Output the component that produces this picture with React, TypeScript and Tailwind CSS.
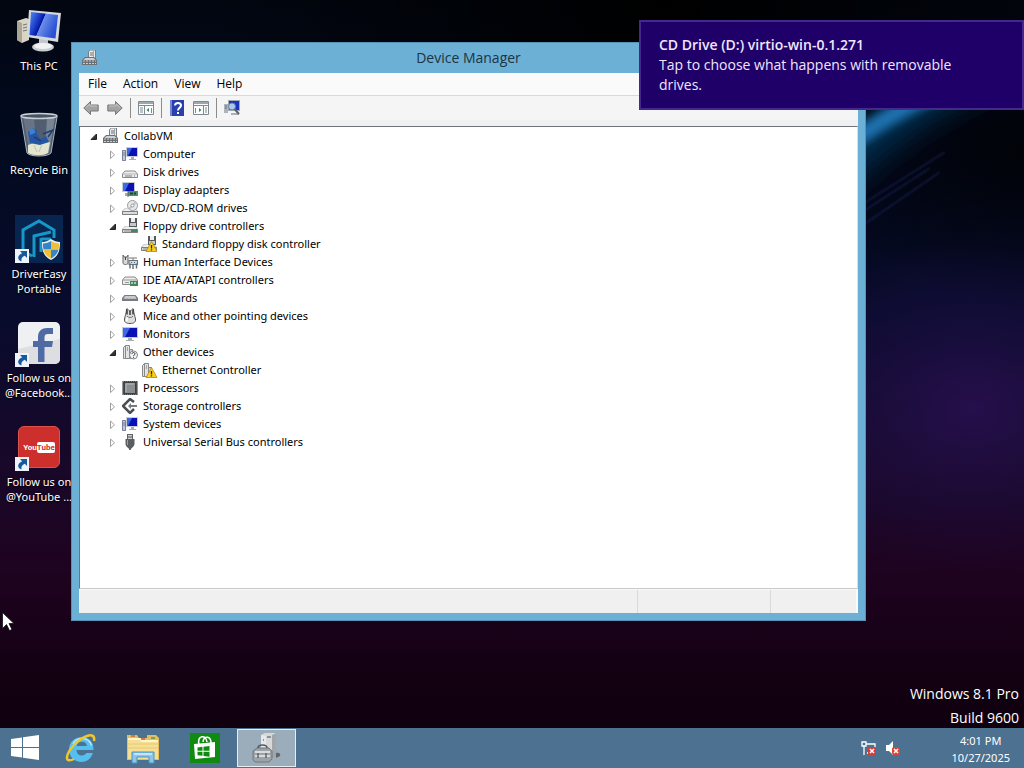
import React, { useState } from "react";

interface DeviceNode {
  label: string;
  icon: React.ReactNode;
  open?: boolean;
  children?: DeviceNode[];
}

function Svg16({ children }: { children: React.ReactNode }) {
  return (
    <svg viewBox="0 0 16 16" className="size-4 shrink-0" aria-hidden="true">
      {children}
    </svg>
  );
}

function Screen() {
  return (
    <>
      <rect x="4" y="1" width="12" height="10" fill="#c9ced6" />
      <rect x="5" y="2" width="10" height="8" fill="#0a12b4" />
      <path d="M5 2h5L6 10H5z" fill="#3d63e0" />
      <path d="M9 11h3v2h2v1H7v-1h2z" fill="#a9aeb5" />
    </>
  );
}

function Drive() {
  return (
    <>
      <path d="M3 8h10l3 3v4H0v-4z" fill="#bdbdbd" />
      <path d="M3.5 8.500h9L15 11H1z" fill="#efefef" />
      <path d="M.5 11.500h15v3H.5z" fill="#dcdcdc" stroke="#808080" />
      <path d="M2 13h8" stroke="#8d8d8d" />
    </>
  );
}

function FloppyDisk() {
  return (
    <>
      <rect x="7" y="0" width="8" height="9" fill="#55595f" />
      <rect x="9" y="0" width="4" height="4" fill="#eef0f2" />
      <rect x="8" y="5" width="6" height="3" fill="#c4c9cf" />
    </>
  );
}

function Warning() {
  return (
    <>
      <path d="M10.500 5.500L16 15.500H5z" fill="#f7cf1d" stroke="#b58b00" strokeWidth="0.800" strokeLinejoin="round" />
      <path d="M10.500 9v3.500M10.500 13.300v1.300" stroke="#3c2c00" strokeWidth="1.300" />
    </>
  );
}

function ComputerIcon() {
  return (
    <Svg16>
      <Screen />
      <rect x="0" y="4" width="4" height="11" fill="#c3c9d2" />
      <path d="M.5 4.500h3v10h-3zM1 7h2M1 9h2" fill="none" stroke="#7880a0" />
    </Svg16>
  );
}

function MonitorIcon() {
  return (
    <Svg16>
      <rect x="0" y="1" width="16" height="11" fill="#c5cbd3" />
      <rect x="1" y="2" width="14" height="9" fill="#0a12b4" />
      <path d="M1 2h7L3 11H1z" fill="#3d6ae6" />
      <path d="M6 12h4v2h2v1H4v-1h2z" fill="#a4abb3" />
    </Svg16>
  );
}

function DisplayIcon() {
  return (
    <Svg16>
      <rect x="0" y="0" width="13" height="10" fill="#c5cbd3" />
      <rect x="1" y="1" width="11" height="8" fill="#0a12b4" />
      <path d="M1 1h6L3 9H1z" fill="#3d6ae6" />
      <path d="M3 11h4v3H3z" fill="#a4abb3" />
      <rect x="6" y="9" width="10" height="5" fill="#4d8f72" />
      <path d="M8 10.500h3v2H8zM12 10.500h2v2h-2z" fill="#24463b" />
      <path d="M6 9v6" stroke="#60676d" />
    </Svg16>
  );
}

function DiskIcon() {
  return (
    <Svg16>
      <path d="M3 7h10l2.500 3v3.500H.5V10z" fill="#ececec" stroke="#8a8a8a" strokeLinejoin="round" />
      <path d="M1 10h14" stroke="#b5b5b5" />
      <path d="M3 12h7M12 12h1" stroke="#7b7b7b" />
    </Svg16>
  );
}

function DvdIcon() {
  return (
    <Svg16>
      <Drive />
      <circle cx="10.500" cy="5.500" r="5" fill="#e7e9ea" stroke="#979b9e" />
      <path d="M10.500 5.500L14 2M10.500 5.500L7 9" stroke="#bfc7cc" strokeWidth="2" />
      <circle cx="10.500" cy="5.500" r="1.500" fill="#fff" stroke="#999" />
      <path d="M.5 11.500h15v3H.5z" fill="#dcdcdc" stroke="#808080" />
    </Svg16>
  );
}

function FloppyIcon({ warning = false }: { warning?: boolean }) {
  return (
    <Svg16>
      <Drive />
      <FloppyDisk />
      {warning ? <Warning /> : <path d="M9 11h6v3H9z" fill="#3f8a66" />}
    </Svg16>
  );
}

function HidIcon() {
  return (
    <Svg16>
      <path d="M1 1l1 2h3l1-2v8c0 2-5 2-5 0z" fill="#d8d8d8" stroke="#666" />
      <path d="M3.500 3v3" stroke="#444" />
      <path d="M7 4h8M11 4v3" stroke="#777" />
      <rect x="7" y="6.500" width="8.500" height="4" fill="#d6d9dc" stroke="#687078" />
      <path d="M8 9.500v5M14.500 9.500v5M11 11v4" stroke="#687078" strokeWidth="1.500" />
      <path d="M9 8.500h1M12 8.500h1" stroke="#2f6f9c" />
    </Svg16>
  );
}

function IdeIcon() {
  return (
    <Svg16>
      <path d="M3 5h10l2.500 3v4.500H.5V8z" fill="#ececec" stroke="#8a8a8a" strokeLinejoin="round" />
      <path d="M1 8h14M3 10.500h4" stroke="#999" />
      <rect x="8" y="9" width="8" height="5" fill="#3c8a5e" />
      <path d="M9 10h2v2H9zM12 10h2v2h-2z" fill="#a6cbb0" />
    </Svg16>
  );
}

function KeyboardIcon() {
  return (
    <Svg16>
      <path d="M2.500 5h11L16 8v3H0V8z" fill="#777b7f" />
      <path d="M3 6h10l1.500 3H1.500z" fill="#d9dcde" />
      <path d="M3 7h10M2 8.500h12" stroke="#92979b" strokeWidth="0.700" strokeDasharray="1 0.500" />
    </Svg16>
  );
}

function MouseIcon() {
  return (
    <Svg16>
      <path d="M4.500 1C4.500 5 3 8 2.500 11c-.4 3 1.500 4.500 5.500 4.500s5.900-1.500 5.500-4.500C13 8 11.500 5 11.500 1 10 0 9.500 3 8 3S6 0 4.500 1z" fill="#dedede" stroke="#555" />
      <path d="M5 1.500v5M11 1.500v5M8 3v4" stroke="#3b3b3b" strokeWidth="1.500" />
      <path d="M5 8c1 2 5 2 6 0" fill="none" stroke="#777" />
      <path d="M4.500 13.500l1-4" stroke="#fff" strokeWidth="1.500" />
    </Svg16>
  );
}

function OtherIcon({ warning = false }: { warning?: boolean }) {
  return (
    <Svg16>
      <path d="M1.500 3.500l2-2v13h-2zM3.500 1.500h4v13h-4z" fill="#e1e3e4" stroke="#85898c" />
      <path d="M5 4h1M5 6h1" stroke="#666" />
      <path d="M7.500 5.500h3v9h-3z" fill="#d1d4d6" stroke="#85898c" />
      {warning ? (
        <Warning />
      ) : (
        <>
          <circle cx="11.500" cy="11" r="4" fill="#f4f5f6" stroke="#808488" />
          <path d="M10 10c0-2 3-2 3 0 0 1-1.500 1-1.500 2M11.500 12.800v1" fill="none" stroke="#333" />
        </>
      )}
    </Svg16>
  );
}

function ProcessorIcon() {
  return (
    <Svg16>
      <rect x="0.500" y="1" width="15" height="14" fill="#3e4143" />
      <rect x="1" y="1.500" width="14" height="13" fill="none" stroke="#77797a" strokeDasharray="1 1" />
      <rect x="3" y="3" width="10" height="10" fill="#8b8f91" />
      <path d="M4 12V4h8" fill="none" stroke="#b7babb" />
    </Svg16>
  );
}

function StorageIcon() {
  return (
    <Svg16>
      <path d="M12 4L8 1 1 8l7 7 4-4" fill="none" stroke="#4b4e50" strokeWidth="2.500" />
      <path d="M6 8l3-3v2h6v2H9v2z" fill="#777b7e" />
    </Svg16>
  );
}

function UsbIcon() {
  return (
    <Svg16>
      <rect x="5.500" y="0.500" width="5" height="5" fill="#d1d1d1" stroke="#606060" />
      <path d="M7 2v2M9 2v2" stroke="#555" />
      <path d="M3.500 5h9v5c0 2-2.500 3.500-3 4.500h-3c-.5-1-3-2.500-3-4.500z" fill="#5b5e60" />
      <path d="M5.500 6v5" stroke="#9da0a2" />
      <path d="M8 14v2" stroke="#444" strokeWidth="1.500" />
    </Svg16>
  );
}

function DeviceManagerIcon() {
  return (
    <Svg16>
      <path d="M6.500 1.500l2-1.500h5v9h-7z" fill="#e9ecee" stroke="#787d81" />
      <path d="M8 3h3M8 5h3" stroke="#6b7074" />
      <path d="M11.500 1v8" stroke="#a0a5a9" />
      <path d="M3 7h9l3 3v5H0v-5z" fill="#6c7073" />
      <path d="M3.500 8h8l2 2h-12z" fill="#cfd2d4" />
      <path d="M1 11h13M1 13.500h13" stroke="#c9cccf" strokeDasharray="2 1" />
    </Svg16>
  );
}

const devices: DeviceNode = {
  label: "CollabVM",
  icon: <DeviceManagerIcon />,
  open: true,
  children: [
    { label: "Computer", icon: <ComputerIcon />, children: [] },
    { label: "Disk drives", icon: <DiskIcon />, children: [] },
    { label: "Display adapters", icon: <DisplayIcon />, children: [] },
    { label: "DVD/CD-ROM drives", icon: <DvdIcon />, children: [] },
    {
      label: "Floppy drive controllers",
      icon: <FloppyIcon />,
      open: true,
      children: [
        { label: "Standard floppy disk controller", icon: <FloppyIcon warning /> },
      ],
    },
    { label: "Human Interface Devices", icon: <HidIcon />, children: [] },
    { label: "IDE ATA/ATAPI controllers", icon: <IdeIcon />, children: [] },
    { label: "Keyboards", icon: <KeyboardIcon />, children: [] },
    { label: "Mice and other pointing devices", icon: <MouseIcon />, children: [] },
    { label: "Monitors", icon: <MonitorIcon />, children: [] },
    {
      label: "Other devices",
      icon: <OtherIcon />,
      open: true,
      children: [{ label: "Ethernet Controller", icon: <OtherIcon warning /> }],
    },
    { label: "Processors", icon: <ProcessorIcon />, children: [] },
    { label: "Storage controllers", icon: <StorageIcon />, children: [] },
    { label: "System devices", icon: <ComputerIcon />, children: [] },
    { label: "Universal Serial Bus controllers", icon: <UsbIcon />, children: [] },
  ],
};

function TreeItem({ node }: { node: DeviceNode }) {
  const [open, setOpen] = useState(Boolean(node.open));

  return (
    <li>
      <div className="flex h-[18px] items-center">
        {node.children ? (
          <button
            type="button"
            aria-label={`Toggle ${node.label}`}
            aria-expanded={open}
            onClick={() => setOpen(!open)}
            className="flex h-4 w-[19px] items-center justify-center"
          >
            <svg viewBox="0 0 9 9" className="size-[9px]" aria-hidden="true">
              {open ? (
                <path d="M7.500 2v5.500H2z" fill="#333" stroke="#222" strokeLinejoin="round" />
              ) : (
                <path d="M2.500 1l4 3.800-4 3.800z" fill="#fff" stroke="#a0a0a0" />
              )}
            </svg>
          </button>
        ) : (
          <span className="w-[19px]" />
        )}
        {node.icon}
        <span className="ml-[5px] whitespace-nowrap">{node.label}</span>
      </div>
      {open && node.children && (
        <ul className="pl-[19px]">
          {node.children.map((child) => (
            <TreeItem key={child.label} node={child} />
          ))}
        </ul>
      )}
    </li>
  );
}

function ToolArrow({ flip = false }: { flip?: boolean }) {
  return (
    <svg viewBox="0 0 16 16" className={flip ? "size-4 -scale-x-100" : "size-4"} aria-hidden="true">
      <path d="M.8 8L7.500 1.500V5H15.200v6H7.500v3.500z" fill="#a3a3a3" stroke="#777" strokeLinejoin="round" />
      <path d="M3 7.500l4-3.500v2h7" fill="none" stroke="#c4c4c4" />
    </svg>
  );
}

function PanelGlyph({ right = false }: { right?: boolean }) {
  return (
    <svg viewBox="0 0 16 14" className="h-[14px] w-4" aria-hidden="true">
      <path d="M.5.5h15v13H.5z" fill="#fdfdfd" stroke="#808a90" />
      <path d="M1 2h14" stroke="#9aa8b0" strokeWidth="2" />
      <path d="M1 4.500h14" stroke="#808a90" />
      {right ? (
        <>
          <path d="M10.500 5v8" stroke="#808a90" />
          <path d="M12 7h2M12 9h2M12 11h2M2.500 7v5" stroke="#7b8b94" />
          <path d="M6 7l2.500 2L6 11z" fill="#3d8465" />
        </>
      ) : (
        <>
          <path d="M6.500 5v8" stroke="#808a90" />
          <path d="M2 7h3M2 9h3M2 11h3M13.500 7v5" stroke="#7b8b94" />
          <path d="M11 7L8.500 9l2.500 2z" fill="#3d8465" />
        </>
      )}
    </svg>
  );
}

function Separator() {
  return <span className="h-5 w-px bg-[#8c8c8c]" />;
}

function ToolButton({ label, children }: { label: string; children: React.ReactNode }) {
  return (
    <button type="button" aria-label={label} className="flex h-[22px] w-6 items-center justify-center">
      {children}
    </button>
  );
}

function Toolbar() {
  return (
    <div className="flex h-[25px] items-center gap-[3px] border-t border-[#d9d9d9] bg-[#f5f5f6]">
      <div className="flex">
        <ToolButton label="Back">
          <ToolArrow />
        </ToolButton>
        <ToolButton label="Forward">
          <ToolArrow flip />
        </ToolButton>
      </div>
      <Separator />
      <ToolButton label="Show/Hide Console Tree">
        <PanelGlyph />
      </ToolButton>
      <Separator />
      <div className="flex">
        <ToolButton label="Help">
          <svg viewBox="0 0 14 16" className="h-4 w-[14px]" aria-hidden="true">
            <rect width="14" height="16" fill="#2a3fae" />
            <path d="M0 0h2v16H0z" fill="#7386d6" />
            <path d="M5 5.500C5 2 11 2 11 5.500c0 2-3 2.500-3 5M8 12v2" fill="none" stroke="#fff" strokeWidth="2" />
          </svg>
        </ToolButton>
        <ToolButton label="Show/Hide Action Pane">
          <PanelGlyph right />
        </ToolButton>
      </div>
      <Separator />
      <ToolButton label="Scan for hardware changes">
        <svg viewBox="0 0 16 16" className="size-4" aria-hidden="true">
          <rect x="4" y="0" width="12" height="11" fill="#a4aab2" />
          <rect x="5" y="1" width="10" height="9" fill="#1a32bd" />
          <path d="M0 4h4v9H0z" fill="#aeb4bc" />
          <path d="M1 6h2M1 8h2M7 14h8" stroke="#666d75" />
          <circle cx="8" cy="6.500" r="3.500" fill="#a9c8f1" stroke="#74808c" />
          <path d="M10.500 9l4.500 5" stroke="#5c646c" strokeWidth="2" />
        </svg>
      </ToolButton>
    </div>
  );
}

function DeviceManagerWindow() {
  return (
    <section
      aria-label="Device Manager"
      className="absolute top-[42px] right-[158px] bottom-[107px] left-[71px] flex flex-col border border-[#5592b3] bg-[#6cb0d6] px-[7px] pb-[7px] text-xs text-black"
    >
      <header className="relative flex h-[30px] shrink-0 items-center justify-center text-[#1d3442]">
        <span className="absolute top-[7px] left-[3px]">
          <DeviceManagerIcon />
        </span>
        <h1 className="text-sm">Device Manager</h1>
      </header>
      <nav className="flex h-[22px] shrink-0 items-center bg-[#fafafb] pl-px">
        {["File", "Action", "View", "Help"].map((item) => (
          <button key={item} type="button" className="px-2">
            {item}
          </button>
        ))}
      </nav>
      <Toolbar />
      <main className="flex min-h-0 flex-1 flex-col bg-[#f0f0f0] pt-[6px]">
        <div className="min-h-0 flex-1 overflow-hidden border border-[#6f747a] border-r-[#dcdcdc] border-b-[#c8c8c8] bg-white pl-1 font-['Noto_Sans',sans-serif] text-[11px]">
          <ul>
            <TreeItem node={devices} />
          </ul>
        </div>
        <footer className="flex h-6 shrink-0 border-t border-[#fafafa] bg-[#f0f0f0]">
          <span className="flex-1 border-r border-[#d9d9d9]" />
          <span className="w-[133px] border-r border-[#d9d9d9]" />
          <span className="w-[87px] border-r-2 border-[#fafafa]" />
        </footer>
      </main>
    </section>
  );
}

function ShortcutBadge() {
  return (
    <svg viewBox="0 0 14 14" className="absolute bottom-0 left-0 size-[14px]" aria-hidden="true">
      <rect width="14" height="14" fill="#edf3f9" />
      <path d="M5 2h7v7L9.800 6.800C7 8 6 9.500 6.500 12.500 2 11 2 6.500 7.200 4.200z" fill="#17599c" />
    </svg>
  );
}

function ThisPcIcon() {
  return (
    <svg viewBox="0 0 48 48" className="size-12" aria-hidden="true">
      <defs>
        <linearGradient id="pc-screen" x1="0" y1="0" x2="1" y2="0.400">
          <stop offset="0" stopColor="#5a8df0" />
          <stop offset="0.350" stopColor="#1a3cc8" />
          <stop offset="0.500" stopColor="#0714a4" />
          <stop offset="0.520" stopColor="#6a8ee8" />
          <stop offset="1" stopColor="#2a50d4" />
        </linearGradient>
      </defs>
      <path d="M2 14l9-3 3 1v21l-7 3-5-3z" fill="#d9d4c5" />
      <path d="M2 14l5 2v20l-5-3z" fill="#aaa797" />
      <path d="M8 18l4-1M8 21l4-1M8 24l4-1" stroke="#77766a" />
      <path d="M24 32h9v8h-9z" fill="#c4c7ca" />
      <ellipse cx="28" cy="40" rx="11" ry="4.500" fill="#c9cdd1" />
      <ellipse cx="28" cy="39" rx="9" ry="3" fill="#f0f1f3" />
      <path d="M14 3l32 3-3 29-31-5z" fill="#d5d8dd" />
      <path d="M16 5l27 3-2.500 23.500L14.500 28z" fill="url(#pc-screen)" />
    </svg>
  );
}

function RecycleBinIcon() {
  return (
    <svg viewBox="0 0 48 48" className="size-12" aria-hidden="true">
      <path d="M6 4h36l-6 38c-3 4-21 4-24 0z" fill="#7d8a9c" opacity="0.650" />
      <path d="M8 6l7 37h7L19 6z" fill="#b1bdc9" opacity="0.250" />
      <path d="M32 6h8l-6 36h-4z" fill="#dbe2e8" opacity="0.300" />
      <path d="M13 34l8-3 6 1 8-1-2 11c-4 3-15 3-20 0z" fill="#e3e5cf" />
      <path d="M13 21c4-6 9-4 9 2l3 5 6-3 3 6-9 3-10-2z" fill="#2456a6" />
      <path d="M14 19c3-3 7-1 6 3l-5 2z" fill="#3f7fd0" />
      <path d="M28 23l10-4-5 7M19 26l7 4" fill="none" stroke="#1f3f74" strokeWidth="1.500" />
      <path d="M19 34l3 7M27 33l-3 8" stroke="#bfc4a9" />
      <ellipse cx="24" cy="5" rx="18" ry="2.500" fill="#475563" stroke="#c8d0d7" strokeWidth="1.500" />
      <path d="M6 6l6 36c3 4 21 4 24 0l6-36" fill="none" stroke="#a9b6c2" />
    </svg>
  );
}

function DriverEasyIcon() {
  return (
    <svg viewBox="0 0 48 48" className="size-12" aria-hidden="true">
      <rect width="48" height="48" fill="#07254e" />
      <path d="M8 36V15L24 6l15 9v8M8 36l9 5M19 42V21l17-4" fill="none" stroke="#1598c8" strokeWidth="3" />
      <path d="M26 24h10M26 23v14M26 31h7" fill="none" stroke="#1598c8" strokeWidth="3" />
      <path d="M36 24c3 2 6 3 9 3 0 8-1 14-9 18-8-4-9-10-9-18 3 0 6-1 9-3z" fill="#e7edf3" />
      <path d="M36 26v8.500h-7.500a18 18 0 01-.5-6c3 0 6-1 8-2.500zM36 34.500h7.500c-1 4-3 6.500-7.500 9z" fill="#3484c9" />
      <path d="M36 26c2 1.500 5 2.500 8 2.500a18 18 0 01-.5 6H36zM28.500 34.500H36v9c-4.500-2.500-6.500-5-7.500-9z" fill="#f1bf35" />
    </svg>
  );
}

function FacebookIcon() {
  return (
    <svg viewBox="0 0 48 48" className="size-12" aria-hidden="true">
      <rect x="3" y="3" width="42" height="42" rx="5" fill="#eef0f2" />
      <path d="M3 30L45 20v20a5 5 0 01-5 5H8a5 5 0 01-5-5z" fill="#dcdee2" />
      <path d="M23 43V28h-5v-6h5v-4c0-6 4-9 9-9h6v6h-5c-2.500 0-3.500 1-3.500 3.500V22H38l-1 6h-7.500v15z" fill="#506aa3" />
    </svg>
  );
}

function YouTubeIcon() {
  return (
    <div className="flex size-12 items-center justify-center">
      <div className="flex size-[42px] items-center justify-center rounded-md border border-[#dc524c] bg-[#cd2f2c] font-['Roboto',sans-serif] text-[8px] leading-[11px] font-bold text-white text-shadow-none">
        <span>You</span>
        <span className="rounded-xs bg-white text-[#c93330]">Tube</span>
      </div>
    </div>
  );
}

const shortcuts = [
  { lines: ["This PC"], icon: <ThisPcIcon />, badge: false },
  { lines: ["Recycle Bin"], icon: <RecycleBinIcon />, badge: false },
  { lines: ["DriverEasy", "Portable"], icon: <DriverEasyIcon />, badge: true },
  { lines: ["Follow us on", "@Facebook..."], icon: <FacebookIcon />, badge: true },
  { lines: ["Follow us on", "@YouTube ..."], icon: <YouTubeIcon />, badge: true },
];

function DesktopIcons() {
  return (
    <div className="flex w-[78px] flex-col pt-[7px]">
      {shortcuts.map((shortcut) => (
        <button
          key={shortcut.lines.join(" ")}
          type="button"
          className="flex h-[104px] flex-col items-center gap-[3px] font-['Noto_Sans',sans-serif] text-[11px] leading-[15px] whitespace-nowrap text-white text-shadow-[0_1px_2px_#000]"
        >
          <span className="relative">
            {shortcut.icon}
            {shortcut.badge && <ShortcutBadge />}
          </span>
          <span>
            {shortcut.lines.map((line) => (
              <span key={line} className="block">
                {line}
              </span>
            ))}
          </span>
        </button>
      ))}
    </div>
  );
}

function Wallpaper() {
  return (
    <svg
      viewBox="0 0 1024 768"
      preserveAspectRatio="none"
      className="absolute inset-0 size-full"
      aria-hidden="true"
    >
      <defs>
        <linearGradient id="sky" x1="0" y1="0" x2="0" y2="1">
          <stop offset="0" stopColor="#010610" />
          <stop offset="0.200" stopColor="#020a20" />
          <stop offset="0.420" stopColor="#090b2d" />
          <stop offset="0.600" stopColor="#180829" />
          <stop offset="0.740" stopColor="#1f0320" />
          <stop offset="0.880" stopColor="#130112" />
          <stop offset="1" stopColor="#0c000c" />
        </linearGradient>
        <radialGradient id="shade" cx="0.650" cy="0" r="0.450">
          <stop offset="0" stopColor="#000" />
          <stop offset="1" stopColor="#000" stopOpacity="0" />
        </radialGradient>
        <radialGradient id="night" cx="1" cy="0.200" r="0.200">
          <stop offset="0" stopColor="#010308" />
          <stop offset="1" stopColor="#010308" stopOpacity="0" />
        </radialGradient>
        <radialGradient id="violet" cx="0.950" cy="0.530" r="0.220">
          <stop offset="0" stopColor="#2a1052" stopOpacity="0.850" />
          <stop offset="1" stopColor="#1a1040" stopOpacity="0" />
        </radialGradient>
        <filter id="soft" x="-50%" y="-50%" width="200%" height="200%">
          <feGaussianBlur stdDeviation="14" />
        </filter>
        <filter id="glow" x="-50%" y="-50%" width="200%" height="200%">
          <feGaussianBlur stdDeviation="5" />
        </filter>
        <filter id="fine" x="-50%" y="-50%" width="200%" height="200%">
          <feGaussianBlur stdDeviation="1" />
        </filter>
      </defs>
      <rect width="1024" height="768" fill="url(#sky)" />
      <rect width="1024" height="768" fill="url(#shade)" />
      <rect width="1024" height="768" fill="url(#night)" />
      <rect width="1024" height="768" fill="url(#violet)" />
      <path d="M820 190C870 140 920 100 1010 60" fill="none" stroke="#062c4c" strokeWidth="36" filter="url(#soft)" />
      <path d="M830 158C870 127 900 108 960 80" fill="none" stroke="#1c71ae" strokeWidth="18" filter="url(#glow)" />
      <path
        d="M850 212L945 152M850 220L930 168M850 234L940 172"
        stroke="#1b2350"
        strokeOpacity="0.700"
        strokeWidth="2"
        filter="url(#fine)"
      />
    </svg>
  );
}

function Toast() {
  return (
    <aside
      role="status"
      className="absolute top-5 right-0 w-[385px] border-2 border-[#43298b] bg-[#1f0068] px-[18px] py-[13px] text-sm leading-5 text-[#efe6ff]"
    >
      <p className="font-semibold">CD Drive (D:) virtio-win-0.1.271</p>
      <p className="pr-10">Tap to choose what happens with removable drives.</p>
    </aside>
  );
}

function StartIcon() {
  return (
    <svg viewBox="0 0 28 28" className="size-7" aria-hidden="true">
      <path d="M0 5l11-1.500V13H0zM12 3.300L28 1v12H12zM0 14h11v9.500L0 22zM12 14h16v12l-16-2.300z" fill="#fff" />
    </svg>
  );
}

function InternetExplorerIcon() {
  return (
    <svg viewBox="0 0 32 32" className="size-8" aria-hidden="true">
      <path
        d="M28.500 18H11.500c.3 4 2.500 5.500 5.300 5.500 2.300 0 3.700-1 4.500-2.500h6.600c-1.600 5-5.700 9-11.200 9C9.500 30 4 25 4 17.500S9.700 5 17 5c7.500 0 11.800 5.500 11.500 13zM11.700 14h10.200c-.3-2.800-2-4.300-5-4.300-2.800 0-4.700 1.500-5.200 4.300z"
        fill="#55bff0"
      />
      <path d="M8 12c2-4 5-5.500 9-5.500 5 0 8 2.500 9.500 7" fill="none" stroke="#b7e8fc" strokeWidth="1.500" />
      <path d="M29 9c1-5-2-7-7-5C13 7 3 18 2 25c-.5 4 3 4 7 2" fill="none" stroke="#f0c72b" strokeWidth="2.500" />
    </svg>
  );
}

function FolderIcon() {
  return (
    <svg viewBox="0 0 32 32" className="size-8" aria-hidden="true">
      <path d="M0 3h10l2 3h8V3h9l3 3v22H0z" fill="#e6bd5c" />
      <path d="M1 8h30v19H1z" fill="#f5df96" />
      <path d="M1 7h12l2 2h16" fill="none" stroke="#fff4c6" strokeWidth="2" />
      <path d="M1 12h30M1 16h30" stroke="#e8c970" />
      <path d="M4 4h4M14 7h4" stroke="#c5643a" strokeWidth="1.500" />
      <path d="M24 6h4" stroke="#4d9a5d" strokeWidth="1.500" />
      <path d="M5 31V20h22v11h-5v-6H10v6z" fill="#8bc5e9" stroke="#4b93bf" />
      <path d="M7 22h18" stroke="#d5effc" strokeWidth="1.500" />
    </svg>
  );
}

function StoreIcon() {
  return (
    <svg viewBox="0 0 30 30" className="size-[30px]" aria-hidden="true">
      <rect width="30" height="30" fill="#108a10" />
      <path d="M4 11l21-2v15L5 26z" fill="#fff" />
      <path d="M9 12c-2-10 7-11 8-3M13 9c1-7 8-6 8 1" fill="none" stroke="#fff" strokeWidth="1.500" />
      <path d="M7.500 14.500l5-.7v4h-5zM13.500 13.700l6-.8v4.900h-6zM7.500 18.800h5v4l-5-.6zM13.500 18.800h6v4.900l-6-.8z" fill="#108a10" />
    </svg>
  );
}

function DevicesTaskIcon() {
  return (
    <svg viewBox="0 0 32 32" className="size-8" aria-hidden="true">
      <path d="M10 3l4-2h11v24l-4 2H10z" fill="#d6d8d9" />
      <path d="M10 3l5 1v23h-5z" fill="#e6e8e9" />
      <path d="M21 3l4-2v24l-4 2z" fill="#a1a6aa" />
      <path d="M12 8h1M16 5h4" stroke="#74797d" strokeWidth="1.500" />
      <path d="M25 21c3-1 5 1 4 3l-4 2z" fill="#5f666a" />
      <path d="M2 19l4-3h12l3 3v8l-3 3H4l-2-2z" fill="#9da3a7" stroke="#70777c" />
      <path d="M4 20h15M4 24h15" stroke="#d9dcde" strokeWidth="2" />
      <path d="M7 16c0-4 9-4 9 0" fill="none" stroke="#555c61" strokeWidth="1.500" />
      <path d="M7 21v5M15 21v5" stroke="#5f666b" strokeWidth="1.500" />
    </svg>
  );
}

const pinned = [
  { label: "Internet Explorer", icon: <InternetExplorerIcon /> },
  { label: "File Explorer", icon: <FolderIcon /> },
  { label: "Store", icon: <StoreIcon /> },
];

function Taskbar() {
  return (
    <footer className="relative flex h-10 shrink-0 bg-[#4d7190] text-white">
      <button type="button" aria-label="Start" className="flex w-[50px] items-center justify-center">
        <StartIcon />
      </button>
      {pinned.map((item) => (
        <button key={item.label} type="button" aria-label={item.label} className="flex w-[62px] items-center justify-center">
          {item.icon}
        </button>
      ))}
      <button
        type="button"
        aria-label="Device Manager"
        className="my-px ml-px flex w-[59px] items-center justify-center border border-[#e7eef3] bg-[#9badbb]"
      >
        <DevicesTaskIcon />
      </button>
      <div className="ml-auto flex items-center pr-[14px]">
        <div className="mr-[50px] flex gap-2">
          <button type="button" aria-label="Network">
            <svg viewBox="0 0 16 16" className="size-4" aria-hidden="true">
              <path d="M1 2h4v4H1zM3 6v9M5 4h9v7M6 13h3" fill="none" stroke="#fff" strokeWidth="1.300" />
              <rect x="7" y="7" width="8" height="8" rx="1" fill="#d63a39" />
              <path d="M9 9l4 4M13 9l-4 4" stroke="#fff" strokeWidth="1.500" />
            </svg>
          </button>
          <button type="button" aria-label="Volume">
            <svg viewBox="0 0 16 16" className="size-4" aria-hidden="true">
              <path d="M1 5h3l4-4v14l-4-4H1z" fill="#fff" />
              <rect x="7" y="7" width="8" height="8" rx="2" fill="#db4434" />
              <path d="M9 9l4 4M13 9l-4 4" stroke="#fff" strokeWidth="1.500" />
            </svg>
          </button>
        </div>
        <button type="button" className="pt-px text-center font-['Noto_Sans',sans-serif] text-[11px] leading-[17px]">
          <span className="block">4:01 PM</span>
          <span className="block">10/27/2025</span>
        </button>
      </div>
    </footer>
  );
}

export default function App() {
  return (
    <div className="relative flex h-screen flex-col overflow-hidden bg-[#020a20] font-['Open_Sans','Noto_Sans',sans-serif]">
      <Wallpaper />
      <div className="relative min-h-0 flex-1">
        <DesktopIcons />
        <p className="absolute right-[5px] -bottom-[2px] text-right text-sm leading-6 text-white">
          Windows 8.1 Pro
          <br />
          Build 9600
        </p>
        <DeviceManagerWindow />
        <Toast />
        <svg viewBox="0 0 12 19" className="absolute top-[612px] left-[2px] h-[19px] w-3" aria-hidden="true">
          <path d="M.5.5v16l4-4 3 6 2.500-1-3-6h5z" fill="#fff" stroke="#111" strokeWidth="0.800" />
        </svg>
      </div>
      <Taskbar />
    </div>
  );
}
